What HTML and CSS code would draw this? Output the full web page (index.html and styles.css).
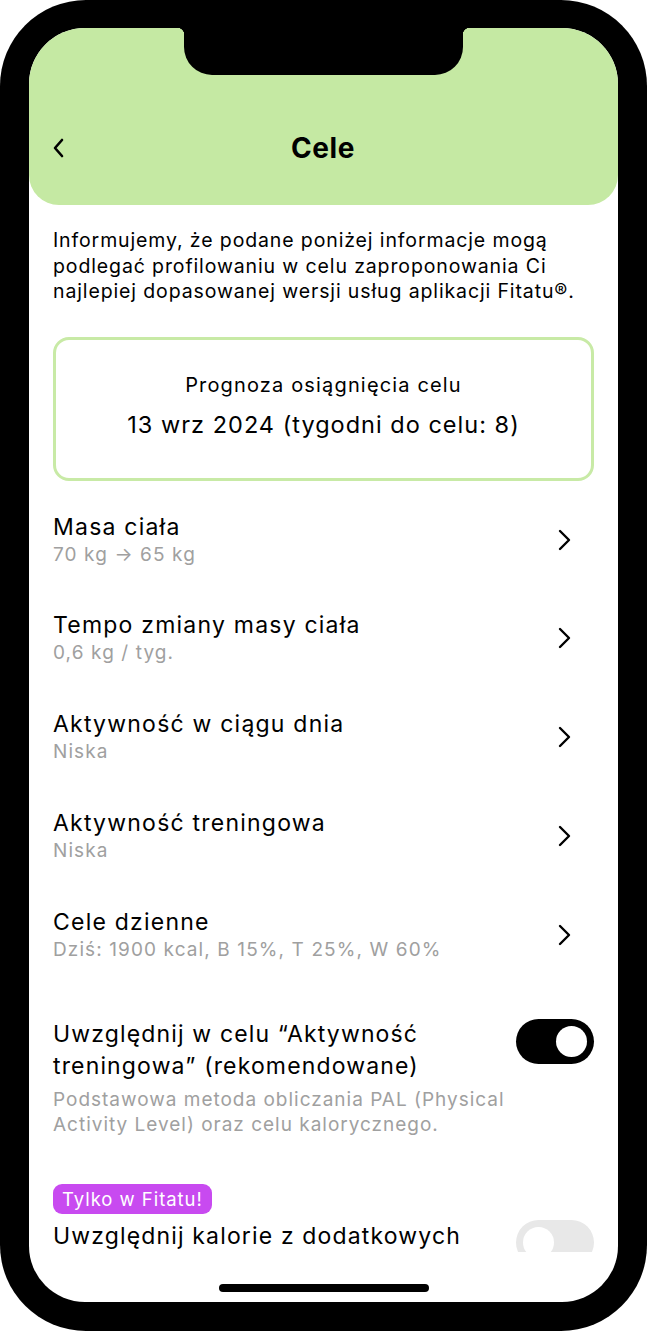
FILE: index.html
```html
<!DOCTYPE html>
<html lang="pl">
<head>
  <meta charset="UTF-8" />
  <meta name="viewport" content="width=device-width, initial-scale=1.0">
  <title>Cele | Fitatu</title>
  <link rel="stylesheet" href="styles.css">
</head>
<body>
  <div class="phone">
    <div class="screen">
      <div class="notch"></div>

      <header class="top-bar">
        <button class="back-btn" aria-label="Wstecz">
          <svg width="12" height="20" viewBox="0 0 12 20"><path d="M10 2 L3 10 L10 18" fill="none" stroke="#000" stroke-width="2.6" stroke-linecap="round" stroke-linejoin="round"/></svg>
        </button>
        <h1>Cele</h1>
      </header>

      <main class="content">
        <p class="info">Informujemy, że podane poniżej informacje mogą podlegać profilowaniu w celu zaproponowania Ci najlepiej dopasowanej wersji usług aplikacji Fitatu®.</p>

        <div class="forecast">
          <div class="forecast-label">Prognoza osiągnięcia celu</div>
          <div class="forecast-value">13 wrz 2024 (tygodni do celu: 8)</div>
        </div>

        <ul class="settings">
          <li class="setting">
            <div>
              <div class="setting-title">Masa ciała</div>
              <div class="setting-sub">70 kg → 65 kg</div>
            </div>
            <svg class="chevron" width="14" height="22" viewBox="0 0 14 22"><path d="M2 2 L11 11 L2 20" fill="none" stroke="#000" stroke-width="2.4" stroke-linecap="round" stroke-linejoin="round"/></svg>
          </li>
          <li class="setting">
            <div>
              <div class="setting-title">Tempo zmiany masy ciała</div>
              <div class="setting-sub">0,6 kg / tyg.</div>
            </div>
            <svg class="chevron" width="14" height="22" viewBox="0 0 14 22"><path d="M2 2 L11 11 L2 20" fill="none" stroke="#000" stroke-width="2.4" stroke-linecap="round" stroke-linejoin="round"/></svg>
          </li>
          <li class="setting">
            <div>
              <div class="setting-title">Aktywność w ciągu dnia</div>
              <div class="setting-sub">Niska</div>
            </div>
            <svg class="chevron" width="14" height="22" viewBox="0 0 14 22"><path d="M2 2 L11 11 L2 20" fill="none" stroke="#000" stroke-width="2.4" stroke-linecap="round" stroke-linejoin="round"/></svg>
          </li>
          <li class="setting">
            <div>
              <div class="setting-title">Aktywność treningowa</div>
              <div class="setting-sub">Niska</div>
            </div>
            <svg class="chevron" width="14" height="22" viewBox="0 0 14 22"><path d="M2 2 L11 11 L2 20" fill="none" stroke="#000" stroke-width="2.4" stroke-linecap="round" stroke-linejoin="round"/></svg>
          </li>
          <li class="setting">
            <div>
              <div class="setting-title">Cele dzienne</div>
              <div class="setting-sub">Dziś: 1900 kcal, B 15%, T 25%, W 60%</div>
            </div>
            <svg class="chevron" width="14" height="22" viewBox="0 0 14 22"><path d="M2 2 L11 11 L2 20" fill="none" stroke="#000" stroke-width="2.4" stroke-linecap="round" stroke-linejoin="round"/></svg>
          </li>
        </ul>

        <div class="switch-row">
          <div class="switch-text">
            <div class="switch-title">Uwzględnij w celu “Aktywność treningowa” (rekomendowane)</div>
            <div class="switch-sub">Podstawowa metoda obliczania PAL (Physical Activity Level) oraz celu kalorycznego.</div>
          </div>
          <div class="toggle on"><span class="knob"></span></div>
        </div>

        <div class="switch-row extra">
          <div class="switch-text">
            <span class="badge">Tylko w Fitatu!</span>
            <div class="switch-title">Uwzględnij kalorie z dodatkowych</div>
          </div>
          <div class="toggle off"><span class="knob"></span></div>
        </div>
      </main>

      <footer class="home-bar">
        <span class="home-indicator"></span>
      </footer>
    </div>
  </div>
</body>
</html>
```

FILE: styles.css
```css
:root {
  --header-green: #c5e9a3;
  --box-border: #c8eaa6;
  --text-color: #000;
  --muted: #a0a0a0;
  --badge: #c84af0;
  --toggle-off: #e8e8e8;
}

* {
  box-sizing: border-box;
}

body {
  margin: 0;
  background: #fff;
  font-family: Inter, 'Noto Sans', Arial, sans-serif;
  color: var(--text-color);
  letter-spacing: 0.06em;
}

.phone {
  width: 647px;
  height: 1331px;
  background: #000;
  border-radius: 86px;
  padding: 28px 29px 29px;
}

.screen {
  position: relative;
  height: 100%;
  background: #fff;
  border-radius: 56px;
  overflow: hidden;
  display: flex;
  flex-direction: column;
}

/* camera notch sits over the header */
.notch {
  position: absolute;
  z-index: 2;
  top: 0;
  left: 155px;
  width: 279px;
  height: 47px;
  background: #000;
  border-radius: 0 0 28px 28px;
}

.notch::before,
.notch::after {
  content: '';
  position: absolute;
  top: 0;
  width: 7px;
  height: 7px;
}

.notch::before {
  left: -7px;
  background: radial-gradient(circle at 0 100%, transparent 7px, #000 7.5px);
}

.notch::after {
  right: -7px;
  background: radial-gradient(circle at 100% 100%, transparent 7px, #000 7.5px);
}

.top-bar {
  height: 177px;
  flex-shrink: 0;
  background: var(--header-green);
  border-radius: 0 0 30px 30px;
  display: flex;
  align-items: center;
  padding: 96px 24px 33px;
}

.back-btn {
  background: none;
  border: none;
  padding: 0;
  margin-left: -1px;
  display: flex;
  cursor: pointer;
}

.top-bar h1 {
  flex: 1;
  margin: 0 0 0 -12px;
  text-align: center;
  font-size: 28px;
  font-weight: 700;
  letter-spacing: 0.02em;
}

.content {
  flex: 1;
  overflow: hidden;
  padding: 0 24px;
}

.info {
  margin: 23px 0 0;
  font-size: 19.5px;
  line-height: 25.5px;
  letter-spacing: 0.045em;
}

.forecast {
  margin-top: 32px;
  height: 144px;
  border: 3px solid var(--box-border);
  border-radius: 16px;
  display: flex;
  flex-direction: column;
  align-items: center;
  justify-content: center;
  text-align: center;
  padding-bottom: 6px;
}

.forecast-label {
  font-size: 20px;
  line-height: 26px;
  letter-spacing: 0.058em;
}

.forecast-value {
  margin-top: 12px;
  font-size: 23.5px;
  line-height: 30px;
  letter-spacing: 0.043em;
}

.settings {
  list-style: none;
  margin: 29px 0 0;
  padding: 0;
}

.setting {
  display: flex;
  align-items: center;
  justify-content: space-between;
  height: 60px;
  margin-bottom: 38.75px;
  cursor: pointer;
}

.setting:last-child {
  margin-bottom: 0;
}

.setting-title {
  font-size: 23px;
  line-height: 30px;
  letter-spacing: 0.053em;
}

.setting-sub {
  font-size: 19px;
  line-height: 26px;
  letter-spacing: 0.058em;
  color: var(--muted);
}

.chevron {
  margin-right: 22px;
}

.switch-row {
  display: flex;
  justify-content: space-between;
  align-items: flex-start;
  margin-top: 53px;
}

.switch-text {
  flex: 1;
  display: flex;
  flex-direction: column;
  align-items: flex-start;
}

.switch-title {
  font-size: 23px;
  line-height: 32px;
  letter-spacing: 0.05em;
}

.switch-sub {
  margin-top: 5px;
  font-size: 19px;
  line-height: 25px;
  letter-spacing: 0.052em;
  color: var(--muted);
}

.toggle {
  width: 78px;
  height: 45px;
  border-radius: 23px;
  flex-shrink: 0;
  display: flex;
  align-items: center;
  padding: 0 7px;
  margin-top: 1px;
}

.toggle .knob {
  width: 31px;
  height: 31px;
  border-radius: 50%;
  background: #fff;
}

.toggle.on {
  background: #000;
  justify-content: flex-end;
}

.toggle.off {
  background: var(--toggle-off);
  justify-content: flex-start;
}

.switch-row.extra {
  margin-top: 47px;
}

.switch-row.extra .toggle {
  margin-top: 36px;
}

.badge {
  background: var(--badge);
  color: #fff;
  font-size: 18.5px;
  line-height: 30px;
  padding: 0 9px;
  border-radius: 9px;
  margin-bottom: 6px;
}

.home-bar {
  height: 50px;
  flex-shrink: 0;
  display: flex;
  justify-content: center;
  padding-top: 32px;
}

.home-indicator {
  width: 210px;
  height: 8px;
  border-radius: 4px;
  background: #000;
}
```
